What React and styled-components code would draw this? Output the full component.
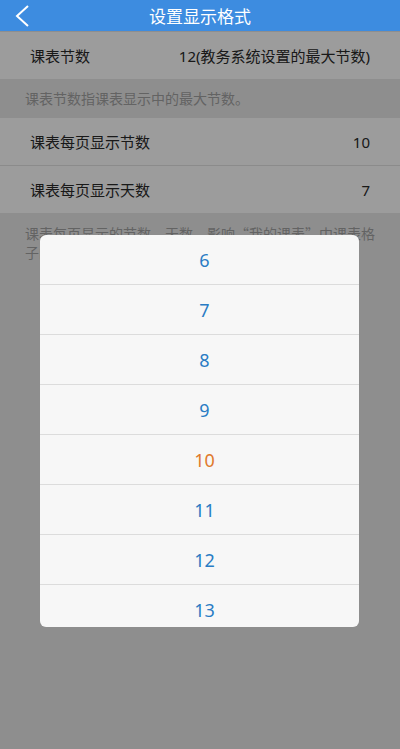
import React from 'react';
import styled, { createGlobalStyle } from 'styled-components';

const GlobalStyle = createGlobalStyle`
  html, body {
    margin: 0;
    padding: 0;
    background: #e9e9e9;
  }
  body {
    font-family: "Noto Sans", "Noto Sans CJK SC", sans-serif;
  }
`;

const Screen = styled.div`
  width: 400px;
  height: 749px;
  display: flex;
  flex-direction: column;
  overflow: hidden;
`;

const Header = styled.div`
  height: 31px;
  flex-shrink: 0;
  background: #3d8ce0;
  display: flex;
  align-items: center;
  justify-content: center;
  position: relative;
  color: #fff;
  font-size: 17px;
  font-family: "Noto Sans CJK SC", sans-serif;
`;

const BackButton = styled.div`
  position: absolute;
  left: 15px;
  top: 5px;
  width: 16px;
  height: 22px;
  display: flex;
`;

const Content = styled.div`
  flex: 1;
  position: relative;
  background: #e9e9e9;
  padding-top: 1px;
`;

const Row = styled.div`
  height: 47px;
  background: #fff;
  display: flex;
  align-items: center;
  justify-content: space-between;
  padding: 0 30px;
  font-size: 15px;
  color: #2a2a2a;
  font-family: "Noto Sans CJK SC", sans-serif;
  & + & {
    border-top: 1px solid #e4e4e4;
  }
`;

const Value = styled.span`
  font-family: "Noto Sans", "Noto Sans CJK SC", sans-serif;
`;

const Hint = styled.div`
  padding: ${p => p.$top}px 22px ${p => p.$bottom}px 25px;
  font-size: 14px;
  line-height: 19px;
  color: #a2a2a2;
  font-family: "Noto Sans CJK SC", sans-serif;
`;

const Overlay = styled.div`
  position: absolute;
  inset: 0;
  background: rgba(0, 0, 0, 0.39);
  padding-top: 204px;
`;

const Dialog = styled.div`
  margin-left: 40px;
  width: 319px;
  height: 392px;
  background: #f7f7f7;
  border-radius: 6px;
  overflow: hidden;
`;

const Option = styled.div`
  height: 49px;
  border-bottom: 1px solid #dcdcdc;
  display: flex;
  align-items: center;
  justify-content: center;
  padding-left: 10px;
  font-size: 18px;
  color: ${p => (p.$active ? '#e07a2c' : '#2a7cc4')};
  font-family: "Noto Sans", sans-serif;
`;

const options = [6, 7, 8, 9, 10, 11, 12, 13];

export default function App() {
  return (
    <Screen>
      <GlobalStyle />
      <Header>
        <BackButton>
          <svg width="16" height="22" viewBox="0 0 16 22">
            <polyline points="13,1 2,11 13,21" fill="none" stroke="#fff" strokeWidth="2" />
          </svg>
        </BackButton>
        设置显示格式
      </Header>
      <Content>
        <Row>
          <span>课表节数</span>
          <Value>12(教务系统设置的最大节数)</Value>
        </Row>
        <Hint $top={10} $bottom={10}>课表节数指课表显示中的最大节数。</Hint>
        <Row>
          <span>课表每页显示节数</span>
          <Value>10</Value>
        </Row>
        <Row>
          <span>课表每页显示天数</span>
          <Value>7</Value>
        </Row>
        <Hint $top={11} $bottom={10}>课表每页显示的节数、天数，影响“我的课表”中课表格子的大小。</Hint>
        <Overlay>
          <Dialog>
            {options.map(n => (
              <Option key={n} $active={n === 10}>{n}</Option>
            ))}
          </Dialog>
        </Overlay>
      </Content>
    </Screen>
  );
}
